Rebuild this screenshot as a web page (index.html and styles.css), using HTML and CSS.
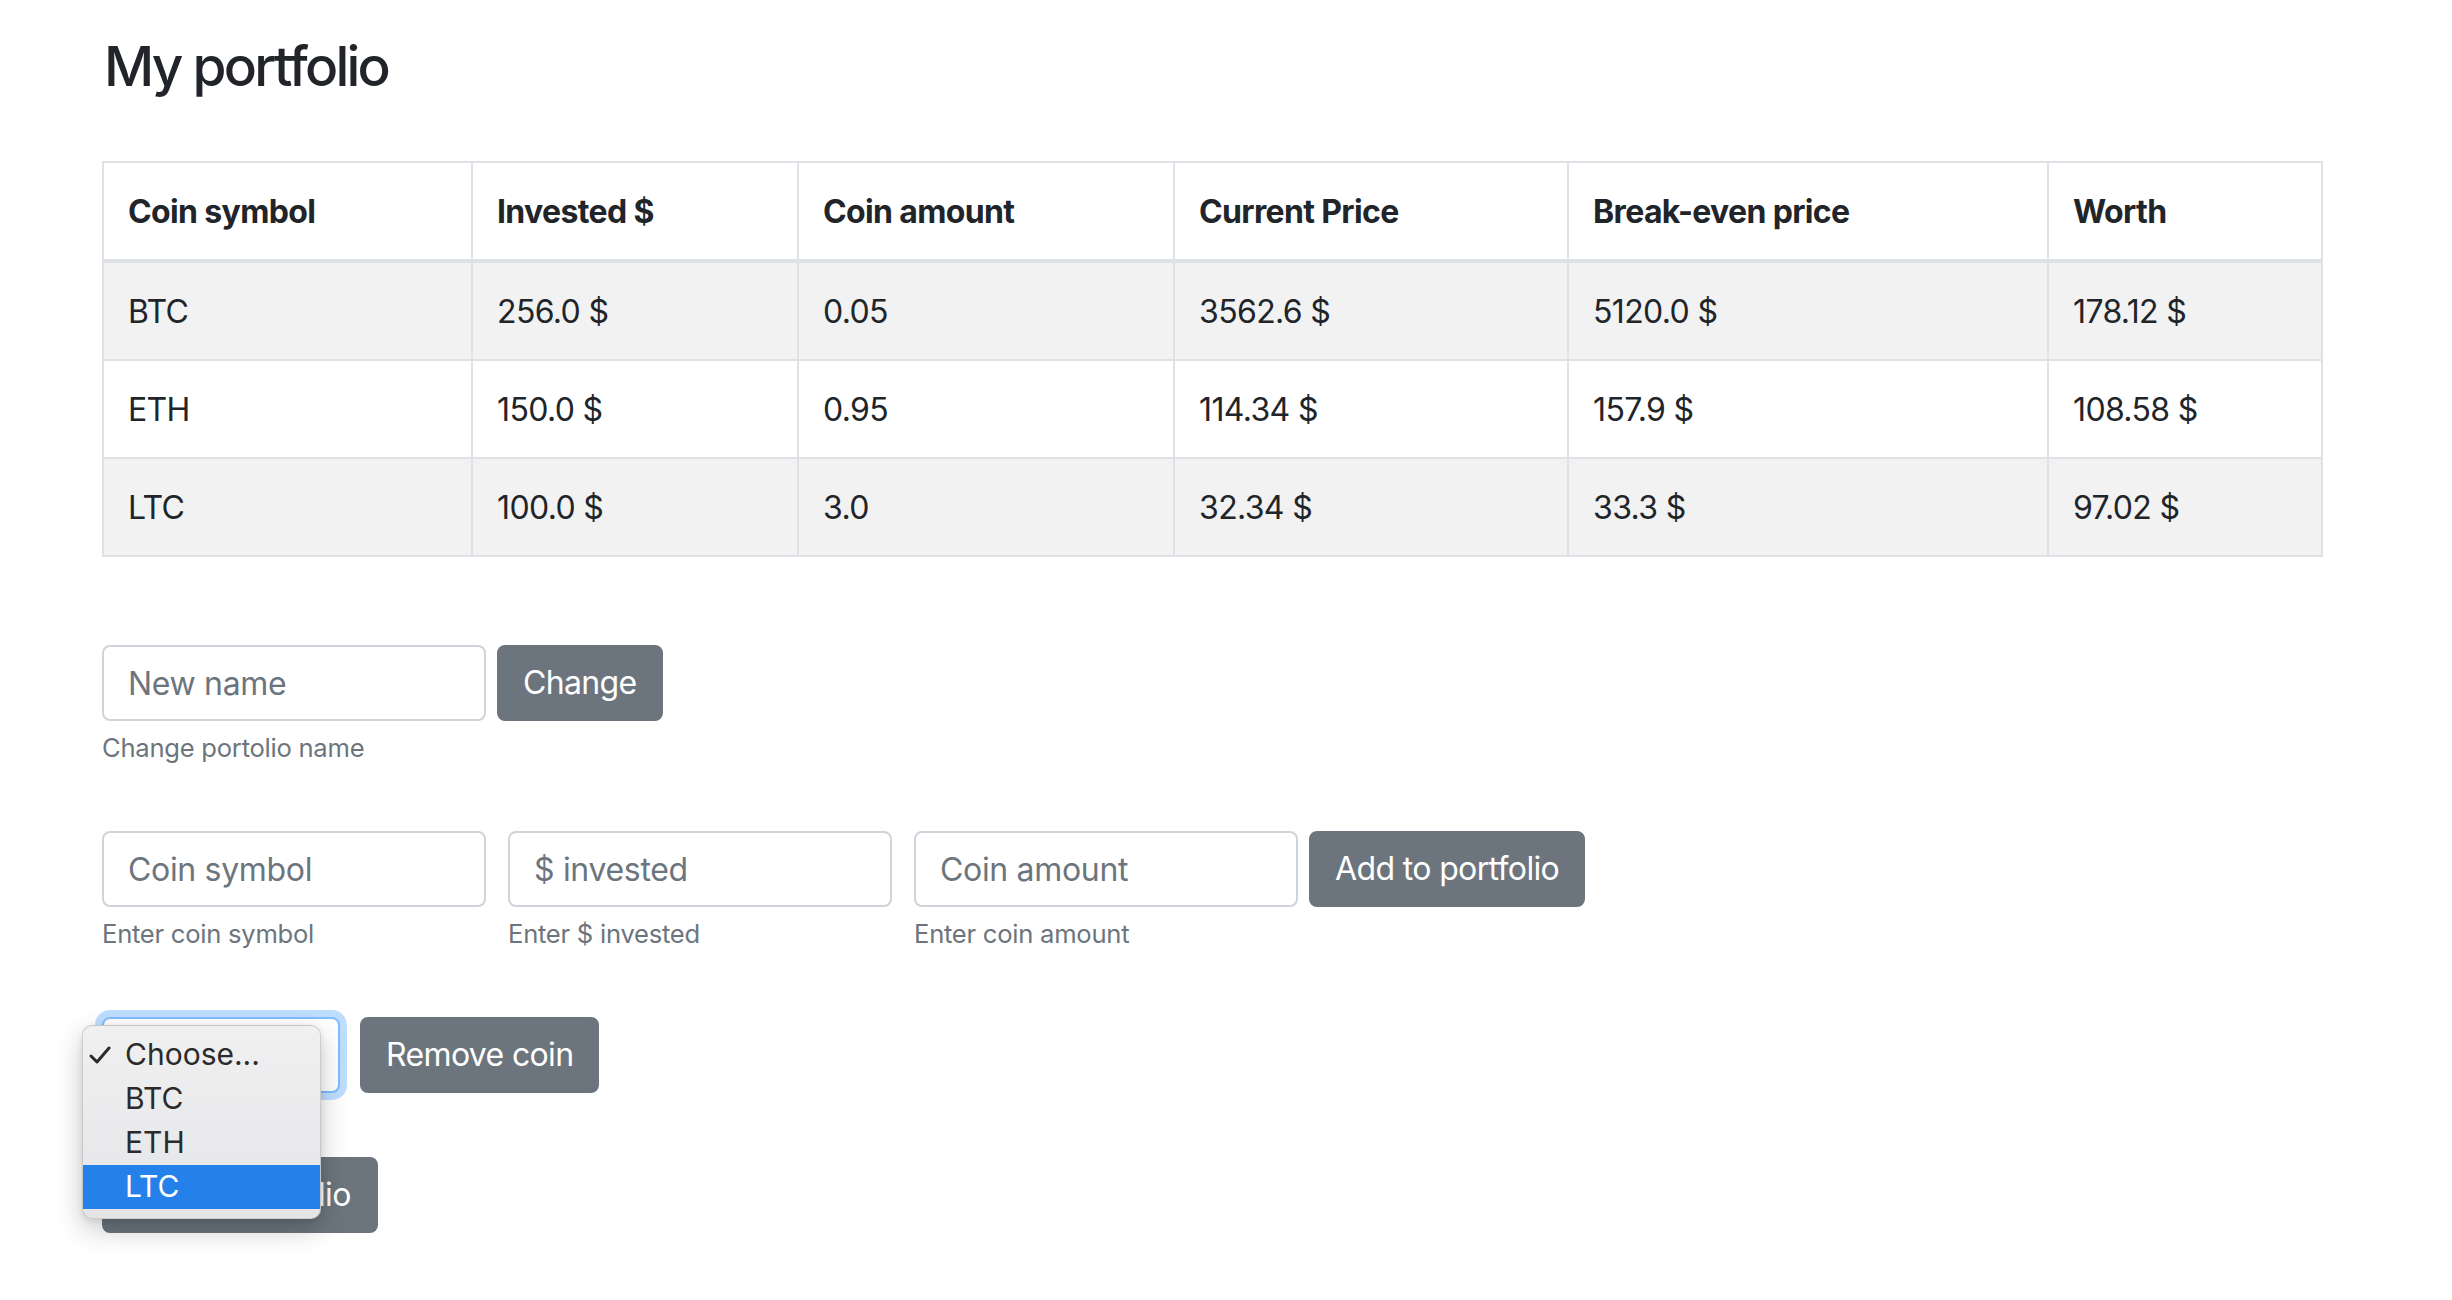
FILE: index.html
```html
<!DOCTYPE html>
<html lang="en">
<head>
<meta charset="utf-8">
<title>My portfolio</title>
<link rel="stylesheet" href="styles.css">
</head>
<body>
<div class="container">
  <h3 class="page-title">My portfolio</h3>

  <table class="table">
    <colgroup>
      <col class="c1"><col class="c2"><col class="c3"><col class="c4"><col class="c5"><col class="c6">
    </colgroup>
    <thead>
      <tr>
        <th>Coin symbol</th>
        <th>Invested $</th>
        <th>Coin amount</th>
        <th>Current Price</th>
        <th>Break-even price</th>
        <th>Worth</th>
      </tr>
    </thead>
    <tbody>
      <tr class="striped">
        <td>BTC</td><td>256.0 $</td><td>0.05</td><td>3562.6 $</td><td>5120.0 $</td><td>178.12 $</td>
      </tr>
      <tr>
        <td>ETH</td><td>150.0 $</td><td>0.95</td><td>114.34 $</td><td>157.9 $</td><td>108.58 $</td>
      </tr>
      <tr class="striped">
        <td>LTC</td><td>100.0 $</td><td>3.0</td><td>32.34 $</td><td>33.3 $</td><td>97.02 $</td>
      </tr>
    </tbody>
  </table>

  <form class="form-row">
    <div class="field">
      <input class="form-control" type="text" placeholder="New name">
      <small class="help">Change portolio name</small>
    </div>
    <button type="button" class="btn btn-gap-s">Change</button>
  </form>

  <form class="form-row">
    <div class="field">
      <input class="form-control" type="text" placeholder="Coin symbol">
      <small class="help">Enter coin symbol</small>
    </div>
    <div class="field field-gap">
      <input class="form-control" type="text" placeholder="$ invested">
      <small class="help">Enter $ invested</small>
    </div>
    <div class="field field-gap">
      <input class="form-control" type="text" placeholder="Coin amount">
      <small class="help">Enter coin amount</small>
    </div>
    <button type="button" class="btn btn-gap-s">Add to portfolio</button>
  </form>

  <form class="form-row">
    <div class="select-wrap">
      <select class="custom-select">
        <option>Choose...</option>
        <option>BTC</option>
        <option>ETH</option>
        <option>LTC</option>
      </select>
      <div class="select-menu">
        <div class="opt checked"><svg class="check" viewBox="0 0 22 20" width="22" height="20"><polyline points="2,11 8,17 20,3" fill="none" stroke="#2b2b2b" stroke-width="3" stroke-linecap="round" stroke-linejoin="round"/></svg>Choose...</div>
        <div class="opt">BTC</div>
        <div class="opt">ETH</div>
        <div class="opt active">LTC</div>
      </div>
    </div>
    <button type="button" class="btn btn-gap-l">Remove coin</button>
  </form>

  <div class="form-row">
    <button type="button" class="btn btn-wide">Delete portfolio</button>
  </div>
</div>
</body>
</html>
```

FILE: styles.css
```css
html, body {
  margin: 0;
  padding: 0;
  background: #ffffff;
}

body {
  font-family: Inter, "Noto Sans", "Liberation Sans", sans-serif;
  font-size: 32px;
  line-height: 1.5;
  color: #212529;
}

.container {
  width: 2219px;
  padding: 33px 0 60px 102px;
}

.page-title {
  margin: 0 0 62px 2px;
  font-size: 55px;
  font-weight: 500;
  line-height: 1.2;
  letter-spacing: -0.05em;
}

/* ---------- table ---------- */
.table {
  width: 2219px;
  border-collapse: collapse;
  table-layout: fixed;
  margin-bottom: 88px;
  letter-spacing: -0.02em;
}

.c1 { width: 369px; }
.c2 { width: 326px; }
.c3 { width: 376px; }
.c4 { width: 394px; }
.c5 { width: 480px; }
.c6 { width: 274px; }

.table th,
.table td {
  padding: 25px 24px 23px;
  line-height: 48px;
  border: 2px solid #dee2e6;
  text-align: left;
  vertical-align: top;
}

.table th {
  font-weight: 700;
  border-bottom-width: 4px;
}

.table tr.striped td {
  background: #f2f2f2;
}

/* ---------- forms ---------- */
.form-row {
  display: flex;
  align-items: flex-start;
  margin: 0 0 64px 0;
}

.field {
  display: flex;
  flex-direction: column;
  width: 384px;
}

.field-gap {
  margin-left: 22px;
}

.form-control {
  box-sizing: border-box;
  width: 384px;
  height: 76px;
  padding: 12px 24px;
  font-family: inherit;
  font-size: 32px;
  line-height: 48px;
  color: #495057;
  background: #ffffff;
  border: 2px solid #ced4da;
  border-radius: 8px;
  outline: none;
  letter-spacing: -0.01em;
}

.form-control::placeholder {
  color: #6c757d;
  opacity: 1;
}

.help {
  margin-top: 8px;
  font-size: 25.6px;
  line-height: 38px;
  color: #6c757d;
  letter-spacing: -0.01em;
}

.btn {
  box-sizing: border-box;
  height: 76px;
  padding: 12px 24px;
  font-family: inherit;
  font-size: 32px;
  line-height: 48px;
  font-weight: 400;
  color: #ffffff;
  background: #6c757d;
  border: 2px solid #6c757d;
  border-radius: 8px;
  white-space: nowrap;
  letter-spacing: -0.02em;
}

.btn-gap-s { margin-left: 11px; }
.btn-gap-l { margin-left: 20px; }
.btn-wide { width: 276px; }

/* ---------- select + open menu ---------- */
.select-wrap {
  position: relative;
}

.custom-select {
  display: block;
  box-sizing: border-box;
  width: 238px;
  height: 76px;
  padding: 12px 24px;
  font-family: inherit;
  font-size: 32px;
  color: #495057;
  background: #ffffff;
  border: 2px solid #80bdff;
  border-radius: 8px;
  box-shadow: 0 0 0 7px rgba(0, 123, 255, 0.25);
  -webkit-appearance: none;
  appearance: none;
  outline: none;
}

.select-menu {
  position: absolute;
  left: -20px;
  top: 8px;
  z-index: 10;
  box-sizing: border-box;
  width: 239px;
  padding: 7px 0 9px;
  background: linear-gradient(#f0f0f1, #e4e5e7);
  border: 1px solid rgba(0, 0, 0, 0.14);
  border-radius: 10px;
  box-shadow: 0 10px 28px rgba(0, 0, 0, 0.22), 0 2px 6px rgba(0, 0, 0, 0.08);
  font-family: Inter, "Noto Sans", "Liberation Sans", sans-serif;
  font-size: 30px;
  color: #2b2b2b;
}

.opt {
  position: relative;
  height: 44px;
  line-height: 42px;
  padding-left: 42px;
}

.opt.active {
  background: #2581ea;
  color: #ffffff;
}

.check {
  position: absolute;
  left: 6px;
  top: 12px;
}
```
